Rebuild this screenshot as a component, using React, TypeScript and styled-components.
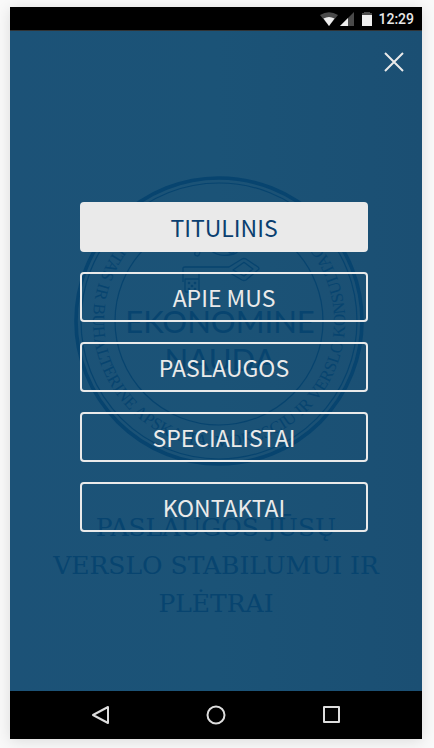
import React from 'react';
import styled, { createGlobalStyle } from 'styled-components';

const GlobalStyle = createGlobalStyle`
  * { box-sizing: border-box; }
  body { margin: 0; background: #f9f9f9; }
`;

const INK = '#07446f';

const Page = styled.div`
  min-height: 100vh;
  padding: 7px 12px 9px 10px;
  display: flex;
`;

const Phone = styled.div`
  flex: 1;
  display: flex;
  flex-direction: column;
  background: #000;
  box-shadow: 0 2px 14px rgba(0, 0, 0, 0.12);
`;

const StatusBar = styled.div`
  height: 24px;
  padding-right: 8px;
  display: flex;
  align-items: center;
  justify-content: flex-end;
  border-bottom: 1px solid #303335;
  color: #e8e8e8;
  font: 500 14px/24px Roboto, sans-serif;
`;

const StatusIcons = styled.svg`
  width: 52px;
  height: 16px;
  margin-right: 6px;
`;

const Screen = styled.main`
  flex: 1;
  display: grid;
  grid-template-columns: minmax(0, 1fr);
  background: linear-gradient(90deg, #1c5277, #1b5377 50%, #1b4f73);
`;

const Backdrop = styled.section`
  grid-area: 1 / 1;
  display: flex;
  flex-direction: column;
  align-items: center;
  padding: 145px 32px 0;
  color: ${INK};
`;

const Seal = styled.svg`
  width: 290px;
  height: 290px;
  margin-left: 6px;
  flex: none;
`;

const Slogan = styled.h1`
  margin: 43px 0 0;
  font: 400 25px/38px 'DejaVu Serif', serif;
  text-align: center;
  text-transform: uppercase;
  max-width: 348px;
`;

const Overlay = styled.div`
  grid-area: 1 / 1;
  position: relative;
  display: flex;
  flex-direction: column;
`;

const CloseButton = styled.button`
  align-self: flex-end;
  width: 32px;
  height: 32px;
  margin: 15px 12px 0 0;
  padding: 0;
  display: grid;
  place-items: center;
  border: 0;
  background: none;
  cursor: pointer;
`;

const Menu = styled.nav`
  display: flex;
  flex-direction: column;
  gap: 20px;
  margin: 124px 54px 0 70px;
`;

const MenuLink = styled.a<{ $active?: boolean }>`
  height: 50px;
  border: 2px solid #eaeaea;
  border-radius: 4px;
  background: ${(p) => (p.$active ? '#eaeaea' : 'transparent')};
  color: ${(p) => (p.$active ? '#0b3f70' : '#eaeaea')};
  font: 400 23px/46px 'Noto Sans CJK SC', 'Noto Sans', sans-serif;
  text-align: center;
  text-decoration: none;
  text-transform: uppercase;
`;

const NavBar = styled.div`
  height: 48px;
  display: flex;
  align-items: center;
  justify-content: space-evenly;
`;

const NavButton = styled.button`
  width: 48px;
  height: 48px;
  padding: 0;
  border: 0;
  background: none;
  display: grid;
  place-items: center;
`;

const items = ['Titulinis', 'Apie mus', 'Paslaugos', 'Specialistai', 'Kontaktai'];

function CompanySeal() {
  return (
    <Seal viewBox="0 0 290 290" fill="none" stroke={INK} aria-hidden="true">
      <circle cx="145" cy="145" r="143" strokeWidth="3.6" />
      <circle cx="145" cy="145" r="138" strokeWidth="1.2" />
      <circle cx="145" cy="145" r="104" strokeWidth="1.2" />
      <path id="ring" stroke="none" d="M145 19A126 126 0 0 0 145 271A126 126 0 0 0 145 19" />
      <g fill={INK} stroke="none">
        <text fontFamily="Liberation Serif, serif" fontSize="17" textAnchor="middle">
          <textPath href="#ring" startOffset="50%">
            AUDITAS IR BUHALTERINE APSKAITA, MOKESCIU IR VERSLO KONSULTACIJOS
          </textPath>
        </text>
        <g fontFamily="Lato, sans-serif" fontSize="31" textAnchor="middle">
          <text x="146" y="157">EKONOMINE</text>
          <text x="146" y="195">NAUDA</text>
        </g>
      </g>
      <g strokeWidth="1.3" strokeLinejoin="round">
        <path d="M109 106V92Q109 91 111 91H155L168 83Q170 82 172 83L184 91Q186 93 184 94L172 104Q170 105 168 104L156 97H125V115Q125 116 124 116H112Q111 116 111 114V103H125" />
        <path d="M159 94L169 87Q170 86 171 87L179 93L170 100Z" />
        <path d="M123 74Q120 76 121 79Q125 82 126 76M136 74Q145 81 155 79Q164 78 164 74M154 75Q158 80 162 74" />
      </g>
      <g fill={INK} stroke="none">
        <circle cx="115" cy="107" r="1.3" /><circle cx="121" cy="107" r="1.3" />
        <circle cx="118" cy="110" r="1.3" />
        <circle cx="115" cy="113" r="1.3" /><circle cx="121" cy="113" r="1.3" />
      </g>
    </Seal>
  );
}

export default function App() {
  return (
    <>
      <GlobalStyle />
      <Page>
        <Phone>
          <StatusBar>
            <StatusIcons viewBox="0 0 52 16" aria-hidden="true">
              <path d="M0 4Q9 -1.5 18 4L9 15Z" fill="#4a4a4a" />
              <path d="M3.500 7.500Q9 4.500 14.500 7.500L9 15Z" fill="#eee" />
              <path d="M34 1V15H20Z" fill="#4a4a4a" />
              <path d="M28 7V15H20Z" fill="#eee" />
              <path d="M42 2H44V1H50V2H52V5H42Z" fill="#4a4a4a" />
              <path d="M42 4H52V15H42Z" fill="#eee" />
            </StatusIcons>
            <span>12:29</span>
          </StatusBar>
          <Screen>
            <Backdrop>
              <CompanySeal />
              <Slogan>Paslaugos Jūsų verslo stabilumui ir plėtrai</Slogan>
            </Backdrop>
            <Overlay>
              <CloseButton aria-label="Close menu">
                <svg width="20" height="20" viewBox="0 0 20 20" stroke="#eaeaea" strokeWidth="2">
                  <path d="M1 1L19 19M19 1L1 19" />
                </svg>
              </CloseButton>
              <Menu>
                {items.map((item, i) => (
                  <MenuLink key={item} href="#" $active={i === 0}>
                    {item}
                  </MenuLink>
                ))}
              </Menu>
            </Overlay>
          </Screen>
          <NavBar>
            <NavButton aria-label="Back">
              <svg width="20" height="20" viewBox="0 0 20 20" fill="none" stroke="#ddd" strokeWidth="2" strokeLinejoin="round">
                <path d="M17 2V18L2 10Z" />
              </svg>
            </NavButton>
            <NavButton aria-label="Home">
              <svg width="20" height="20" viewBox="0 0 20 20" fill="none" stroke="#ddd" strokeWidth="2">
                <circle cx="10" cy="10" r="8.500" />
              </svg>
            </NavButton>
            <NavButton aria-label="Recent apps">
              <svg width="20" height="20" viewBox="0 0 20 20" fill="none" stroke="#ddd" strokeWidth="2" strokeLinejoin="round">
                <rect x="3" y="2" width="15" height="15" />
              </svg>
            </NavButton>
          </NavBar>
        </Phone>
      </Page>
    </>
  );
}
